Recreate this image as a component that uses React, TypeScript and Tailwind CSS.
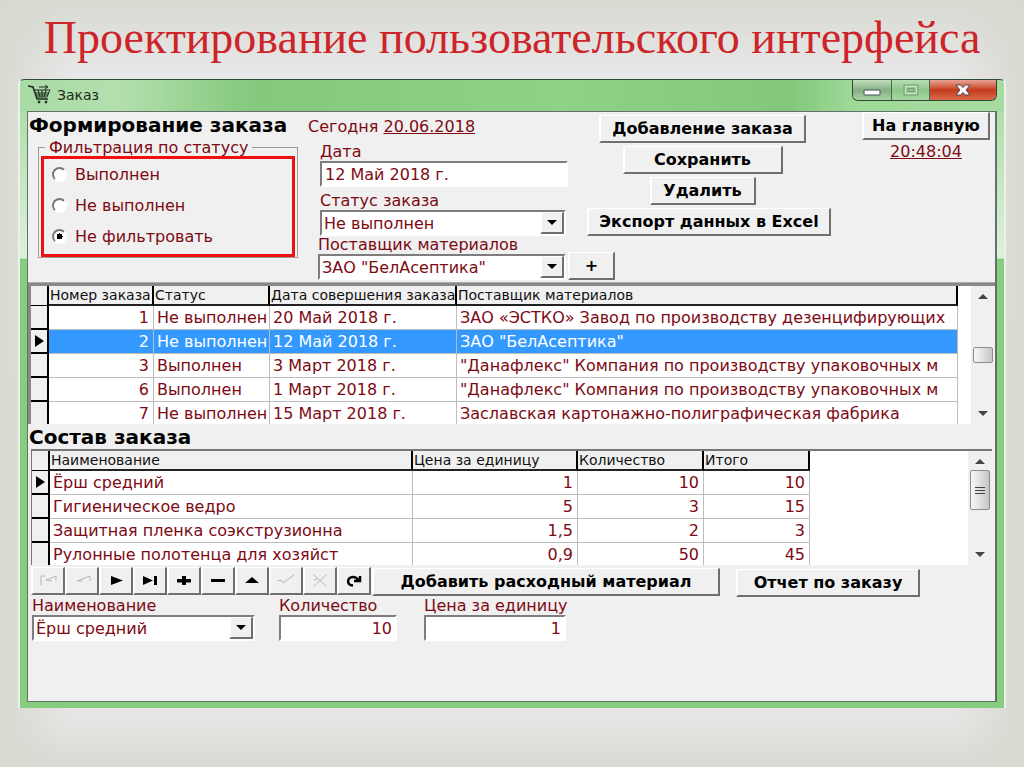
import type { ReactNode } from "react";

const raised =
  "border-t border-l-2 border-b-2 border-r-2 border-t-white border-l-white border-b-[#6f6f6f] border-r-[#6f6f6f] bg-[#f0f0f0]";
const sunken =
  "border-t-2 border-l-2 border-b-2 border-r-2 border-t-[#7d7d7d] border-l-[#7d7d7d] border-b-white border-r-white bg-white";

function PushButton({ children, className = "" }: { children: ReactNode; className?: string }) {
  return (
    <button
      type="button"
      className={`h-7 shrink-0 whitespace-nowrap text-center text-[16px] leading-6 font-bold text-black ${raised} ${className}`}
    >
      {children}
    </button>
  );
}

function TextField({ id, label, value, right, className = "" }: { id: string; label: string; value: string; right?: boolean; className?: string }) {
  return (
    <div className={className}>
      <label htmlFor={id} className="block h-[18px] leading-[18px] whitespace-nowrap">{label}</label>
      <input
        id={id}
        defaultValue={value}
        className={`block h-[26px] w-full rounded-none px-[3px] outline-none ${sunken} ${right ? "text-right" : ""}`}
      />
    </div>
  );
}

function Combo({ id, label, value, className = "" }: { id: string; label: string; value: string; className?: string }) {
  return (
    <div className={className}>
      <label htmlFor={id} className="block h-[18px] leading-[18px] whitespace-nowrap">{label}</label>
      <div className="relative">
        <select id={id} className={`block h-[26px] w-full appearance-none rounded-none pr-6 pl-[2px] outline-none ${sunken}`}>
          <option>{value}</option>
        </select>
        <span className={`pointer-events-none absolute top-[2px] right-[2px] flex h-[22px] w-6 items-center justify-center ${raised}`}>
          <svg width="10" height="5" viewBox="0 0 10 5"><path d="M0 0H10L5 5Z" fill="#000" /></svg>
        </span>
      </div>
    </div>
  );
}

function ScrollBar({ children }: { children: ReactNode }) {
  return (
    <div className="flex w-6 shrink-0 flex-col items-center justify-between bg-[#f0f0f0] py-2">
      <svg width="10" height="5" viewBox="0 0 10 5"><path d="M0 5H10L5 0Z" fill="#444" /></svg>
      {children}
      <svg width="10" height="5" viewBox="0 0 10 5"><path d="M0 0H10L5 5Z" fill="#444" /></svg>
    </div>
  );
}

const Marker = () => (
  <svg width="9" height="12" viewBox="0 0 9 12" className="ml-1 block"><path d="M0 0V12L9 6Z" fill="#000" /></svg>
);

interface Column {
  title: string;
  width: string;
  right?: boolean;
}

function Grid({ columns, rows, selected, current }: { columns: Column[]; rows: string[][]; selected?: number; current: number }) {
  return (
    <table className="w-full table-fixed border-separate border-spacing-0">
      <colgroup>
        <col className="w-[18px]" />
        {columns.map((c) => <col key={c.title} className={c.width} />)}
      </colgroup>
      <thead>
        <tr className="h-5 bg-[#f0f0f0] text-[14px] text-[#111]">
          <th className="border-r-2 border-b border-black p-0" />
          {columns.map((c) => (
            <th key={c.title} className="overflow-hidden border-r-2 border-b-2 border-r-black border-b-[#222] p-0 pl-px text-left leading-[18px] font-normal whitespace-nowrap">
              {c.title}
            </th>
          ))}
        </tr>
      </thead>
      <tbody>
        {rows.map((row, i) => (
          <tr key={row.join()} className={`h-6 ${i === selected ? "bg-[#3399ff] text-white" : "bg-white"}`}>
            <td className="border-r-2 border-b-2 border-black bg-[#f0f0f0] p-0">{i === current && <Marker />}</td>
            {row.map((cell, j) => (
              <td key={columns[j].title} className={`overflow-hidden border-r border-b border-[#bdbdbd] p-0 leading-[22px] whitespace-nowrap ${columns[j].right ? "pr-1 text-right" : "pl-[3px]"}`}>
                {cell}
              </td>
            ))}
          </tr>
        ))}
      </tbody>
    </table>
  );
}

const orderColumns: Column[] = [
  { title: "Номер заказа", width: "w-[105px]", right: true },
  { title: "Статус", width: "w-[116px]" },
  { title: "Дата совершения заказа", width: "w-[187px]" },
  { title: "Поставщик материалов", width: "w-auto" },
];
const orders = [
  ["1", "Не выполнен", "20 Май 2018 г.", "ЗАО «ЭСТКО» Завод по производству дезенцифирующих"],
  ["2", "Не выполнен", "12 Май 2018 г.", "ЗАО \"БелАсептика\""],
  ["3", "Выполнен", "3 Март 2018 г.", "\"Данафлекс\" Компания по производству упаковочных м"],
  ["6", "Выполнен", "1 Март 2018 г.", "\"Данафлекс\" Компания по производству упаковочных м"],
  ["7", "Не выполнен", "15 Март 2018 г.", "Заславская картонажно-полиграфическая фабрика"],
];
const itemColumns: Column[] = [
  { title: "Наименование", width: "w-[363px]" },
  { title: "Цена за единицу", width: "w-[165px]", right: true },
  { title: "Количество", width: "w-[126px]", right: true },
  { title: "Итого", width: "w-[106px]", right: true },
];
const items = [
  ["Ёрш средний", "1", "10", "10"],
  ["Гигиеническое ведро", "5", "3", "15"],
  ["Защитная пленка соэкструзионна", "1,5", "2", "3"],
  ["Рулонные полотенца для хозяйст", "0,9", "50", "45"],
];

const gray = { fill: "none", stroke: "#b5b5b5", strokeWidth: 1 };
const navButtons: { name: string; icon: ReactNode }[] = [
  { name: "Первая", icon: <path d="M2 12V3H6M17 3L7 7L13 8M17 3V8" {...gray} /> },
  { name: "Предыдущая", icon: <path d="M17 3L4 8H9M17 3V8" {...gray} /> },
  { name: "Следующая", icon: <path d="M4 3L16 7.500L4 12Z" /> },
  { name: "Последняя", icon: <path d="M2 3L12 7.500L2 12ZM13 3H16V12H13Z" /> },
  { name: "Вставить", icon: <path d="M7 3H11V6H16V9.500H11V12H7V9.500H2V6H7Z" /> },
  { name: "Удалить запись", icon: <path d="M2 6H16V9H2Z" /> },
  { name: "Изменить", icon: <path d="M2 10L9 4L16 10Z" /> },
  { name: "Принять", icon: <path d="M1 8L4 7L6 10L17 2" {...gray} /> },
  { name: "Отменить", icon: <path d="M3 2L15 13M15 2L3 13M3 7L6 6" {...gray} /> },
  { name: "Обновить", icon: <path d="M8 12.500C1 12 2 4 8 4C11 4 12 5 13 7M15 3V8H9" fill="none" stroke="#000" strokeWidth="2.500" /> },
];

function CartIcon() {
  return (
    <svg width="24" height="20" viewBox="0 0 24 20" fill="none" stroke="#1f2a1f">
      <path d="M0 1L5 2L9 14H20" strokeWidth="1.500" />
      <path d="M6 5H22L19 12H8M7 8H21M8 10H20M10 5L12 12M14 5V12M18 5L16 12" />
      <path d="M11 2H19M17 0L20 2L17 4" />
      <circle cx="11" cy="17" r="1" fill="#1f2a1f" />
      <circle cx="18" cy="17" r="1" fill="#1f2a1f" />
    </svg>
  );
}

function TitleBar() {
  return (
    <div className="-mx-[7px] flex h-[31px] shrink-0 items-start justify-between rounded-t-md bg-[linear-gradient(to_right,#a9dba5,#b3e0ae_10%,#83c87c_24%,#8ed287_55%,#82c77b_78%,#9fda99_85%,#a5dba0)] pr-[7px] pl-2">
      <div className="flex items-center gap-[5px] pt-[3px] text-[14px] text-[#1c2a1c]">
        <CartIcon />
        <span className="leading-6">Заказ</span>
      </div>
      <div className="flex h-[21px] overflow-hidden rounded-b-md border border-t-0 border-[#2f4a33]">
        <button type="button" aria-label="Свернуть" className="flex w-[39px] items-center justify-center border-r border-[#4b6a4d] bg-linear-to-b from-[#c3dfc0] via-[#86b084] to-[#a8d3a4]">
          <svg width="18" height="14" viewBox="0 0 18 14"><rect x="1" y="7" width="16" height="5" rx="1" fill="#fff" stroke="#444c58" /></svg>
        </button>
        <button type="button" aria-label="Развернуть" className="flex w-[38px] items-center justify-center border-r border-[#4b6a4d] bg-linear-to-b from-[#b9dfb5] via-[#8fc58b] to-[#a5d8a0]">
          <svg width="16" height="12" viewBox="0 0 16 12" fill="none"><path d="M1 1H15V11H1Z" stroke="#75a073" /><path d="M2.500 2.500H13.500V9.500H2.500Z" stroke="#cfeacc" /><path d="M5 4.500H11V7.500H5Z" stroke="#75a073" /></svg>
        </button>
        <button type="button" aria-label="Закрыть" className="flex w-[66px] items-center justify-center bg-linear-to-b from-[#e6a493] via-[#c5391b] to-[#d66a48]">
          <svg width="18" height="14" viewBox="0 0 18 14"><path d="M2 2H6.500L9 4.500L11.500 2H16L12 7L16 12H11.500L9 9.500L6.500 12H2L6 7Z" fill="#fff" stroke="#4b4450" /></svg>
        </button>
      </div>
    </div>
  );
}

const filters = ["Выполнен", "Не выполнен", "Не фильтровать"];

export default function App() {
  return (
    <main className="flex min-h-screen flex-col bg-[linear-gradient(to_right,#d9d9d1,#d9d9d100_7%,#d9d9d100_93%,#d9d9d1),linear-gradient(to_bottom,#d9dad2,#e8e7e9_10%,#e5e5e4_94%,#dadad4)] px-[18px] pb-[59px] font-['DejaVu_Sans',Verdana,sans-serif] text-[16px] text-[#7d0a14]">
      <h1 className="h-[79px] pt-2 text-center font-['Liberation_Serif',serif] text-[46px] leading-[60px] whitespace-nowrap text-[#cd2429]">
        Проектирование пользовательского интерфейса
      </h1>
      <div className="flex flex-1 flex-col rounded-t-md border-x-2 border-t border-x-[#e9f3e7] border-t-[#2f4a33] bg-[linear-gradient(to_bottom,#a5dba0,#def0dc_178px,#87cd80_179px)] px-[7px] pb-[6px]">
        <TitleBar />
        <div className="flex flex-1 flex-col border border-r-2 border-[#66706a] bg-[#f0f0f0]">
          <section className="flex h-[171px] border-b border-[#aaa]">
            <div className="w-[280px] shrink-0 pl-px">
              <h2 className="h-[26px] text-[20px] leading-[26px] font-bold whitespace-nowrap text-black">Формирование заказа</h2>
              <fieldset className="ml-[9px] w-[260px] border border-[#9a9a9a] px-[2px]">
                <legend className="ml-1 h-[18px] px-1 leading-5">Фильтрация по статусу</legend>
                <div className="border-[3px] border-[#f01010] pb-[2px] pl-2">
                  {filters.map((name, i) => (
                    <label key={name} className="flex h-[31px] items-center gap-2">
                      <input
                        type="radio"
                        name="status"
                        defaultChecked={i === 2}
                        className="size-[15px] appearance-none rounded-full border-2 border-t-[#777] border-r-white border-b-white border-l-[#777] bg-white bg-[radial-gradient(circle,#000_0_3px,transparent_3px)] not-checked:bg-none"
                      />
                      {name}
                    </label>
                  ))}
                </div>
              </fieldset>
            </div>
            <div className="w-[279px] shrink-0">
              <p className="h-[31px] leading-[30px]">Сегодня <span className="underline">20.06.2018</span></p>
              <TextField id="date" label="Дата" value="12 Май 2018 г." className="ml-3 w-[248px]" />
              <Combo id="status" label="Статус заказа" value="Не выполнен" className="mt-[5px] ml-3 w-[246px]" />
              <div className="-mr-9 ml-[10px] flex items-end gap-[2px]">
                <Combo id="supplier" label="Поставщик материалов" value={'ЗАО "БелАсептика"'} className="w-[248px] shrink-0" />
                <PushButton className="w-[47px]">+</PushButton>
              </div>
            </div>
            <div className="flex shrink-0 flex-col gap-[3px] pt-[3px]">
              <div className="flex w-[231px] flex-col items-center gap-[3px]">
                <PushButton className="w-[207px]">Добавление заказа</PushButton>
                <PushButton className="w-[160px]">Сохранить</PushButton>
                <PushButton className="w-[106px]">Удалить</PushButton>
              </div>
              <PushButton className="w-[244px]">Экспорт данных в Excel</PushButton>
            </div>
            <div className="ml-auto flex flex-col items-center pr-[5px]">
              <PushButton className="w-[128px]">На главную</PushButton>
              <p className="leading-6 underline">20:48:04</p>
            </div>
          </section>
          <section className="flex h-[141px] overflow-hidden border-t-3 border-l-3 border-[#888] bg-white">
            <div className="min-w-0 flex-1"><Grid columns={orderColumns} rows={orders} selected={1} current={1} /></div>
            <div className="w-[13px] shrink-0" />
            <ScrollBar>
              <span className="h-4 w-5 rounded-xs border border-[#8c8c8c] bg-linear-to-r from-[#f8f8f8] to-[#c6c6ca]" />
            </ScrollBar>
          </section>
          <h2 className="h-[25px] pl-px text-[20px] leading-[27px] font-bold text-black">Состав заказа</h2>
          <section className="mr-[3px] ml-[3px] flex h-[116px] overflow-hidden border-t-2 border-l border-[#777] bg-white">
            <div className="w-[778px] shrink-0"><Grid columns={itemColumns} rows={items} current={0} /></div>
            <div className="flex-1" />
            <ScrollBar>
              <span className="mb-9 flex h-10 w-5 flex-col items-center justify-center gap-[2px] rounded-xs border border-[#8c8c8c] bg-linear-to-r from-[#f8f8f8] to-[#c6c6ca]">
                <i className="h-px w-[10px] bg-[#444]" />
                <i className="h-px w-[10px] bg-[#444]" />
                <i className="h-px w-[10px] bg-[#444]" />
              </span>
            </ScrollBar>
          </section>
          <div className="flex items-start pt-[2px] pl-[3px]">
            {navButtons.map((b) => (
              <button key={b.name} type="button" aria-label={b.name} className={`flex h-7 w-[34px] items-center justify-center ${raised}`}>
                <svg width="18" height="15" viewBox="0 0 18 15">{b.icon}</svg>
              </button>
            ))}
            <PushButton className="mt-px ml-px w-[348px]">Добавить расходный материал</PushButton>
            <PushButton className="mt-[2px] ml-4 w-[184px]">Отчет по заказу</PushButton>
          </div>
          <div className="flex items-end pl-1">
            <Combo id="item" label="Наименование" value="Ёрш средний" className="w-[223px]" />
            <TextField id="count" label="Количество" value="10" right className="ml-6 w-[118px]" />
            <TextField id="price" label="Цена за единицу" value="1" right className="ml-[27px] w-[142px]" />
          </div>
        </div>
      </div>
    </main>
  );
}
